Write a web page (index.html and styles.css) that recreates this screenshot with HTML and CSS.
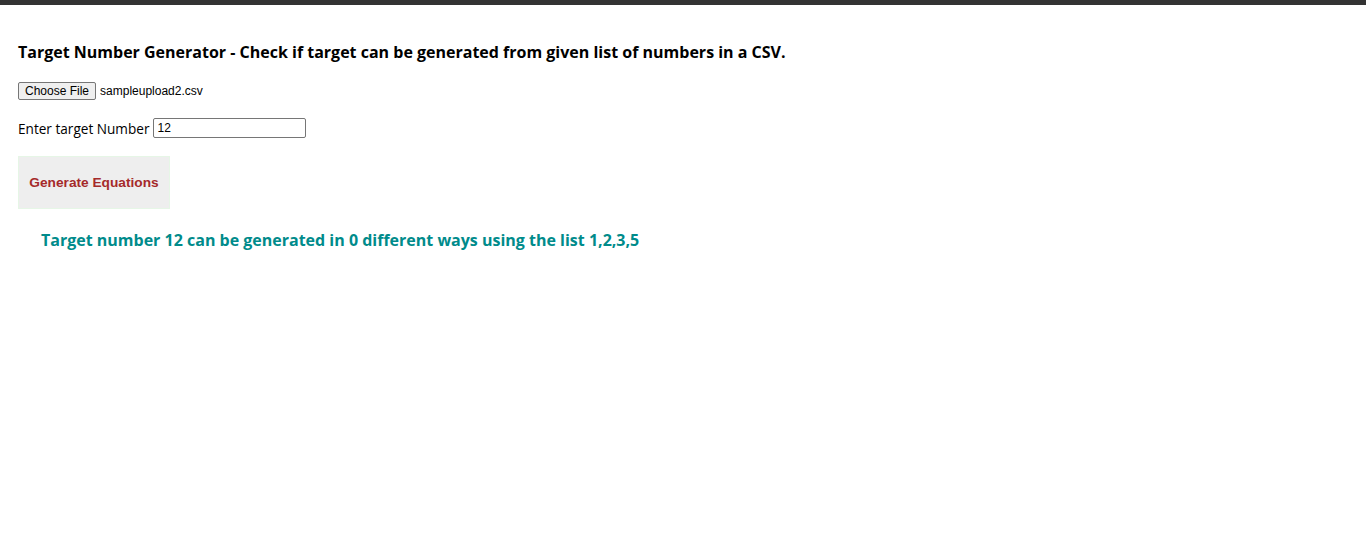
FILE: index.html
```html
<!DOCTYPE html>
<html>
<head>
<meta charset="utf-8">
<link rel="stylesheet" href="styles.css">
</head>
<body>
<div class="topbar"></div>
<main class="page">
  <h3 class="title">Target Number Generator - Check if target can be generated from given list of numbers in a CSV.</h3>
  <div class="row file-row">
    <span class="file-btn">Choose File</span>
    <span class="file-name">sampleupload2.csv</span>
  </div>
  <div class="row target-row">
    <label class="label">Enter target Number</label>
    <span class="text-input">12</span>
  </div>
  <div class="row">
    <span class="gen-btn">Generate Equations</span>
  </div>
  <p class="result">Target number 12 can be generated in 0 different ways using the list 1,2,3,5</p>
</main>
</body>
</html>
```
FILE: styles.css
```css
html, body { margin: 0; padding: 0; background: #fff; }
body { font-family: "Open Sans", "Noto Sans", sans-serif; color: #000; }
.topbar { height: 5px; background: #333; }
.page { padding: 0 18px; }
.title { margin: 36px 0 0; font-size: 16px; font-weight: 700; line-height: 22px; }
.row { display: flex; align-items: center; }
.file-row { margin-top: 18px; height: 19px; }
.file-btn {
  font-family: "Liberation Sans", Arial, sans-serif; font-size: 12px;
  box-sizing: border-box; height: 18px; padding: 0 6px; display: inline-flex; align-items: center;
  background: #efefef; border: 1px solid #767676; border-radius: 2px; color: #000;
}
.file-name { font-family: "Liberation Sans", Arial, sans-serif; font-size: 12px; margin-left: 4px; }
.target-row { margin-top: 18px; height: 20px; }
.label { font-size: 13.6px; margin-right: 4px; }
.text-input {
  box-sizing: border-box; width: 153px; height: 20px; border: 1px solid #767676; border-radius: 2px;
  font-family: "Liberation Sans", Arial, sans-serif; font-size: 12px; padding: 0 3px;
  display: inline-flex; align-items: center;
}
.gen-btn {
  margin-top: 18px; box-sizing: border-box; width: 152px; height: 53px;
  background: #eee; border: 1px solid #e6f6e6; display: flex; align-items: center; justify-content: center;
  font-family: "Liberation Sans", Arial, sans-serif; font-size: 13.7px; font-weight: 700; color: #a52a2a;
}
.result { margin: 20px 0 0 23px; font-size: 16px; font-weight: 700; color: #008b8b; line-height: 23px; }
```
